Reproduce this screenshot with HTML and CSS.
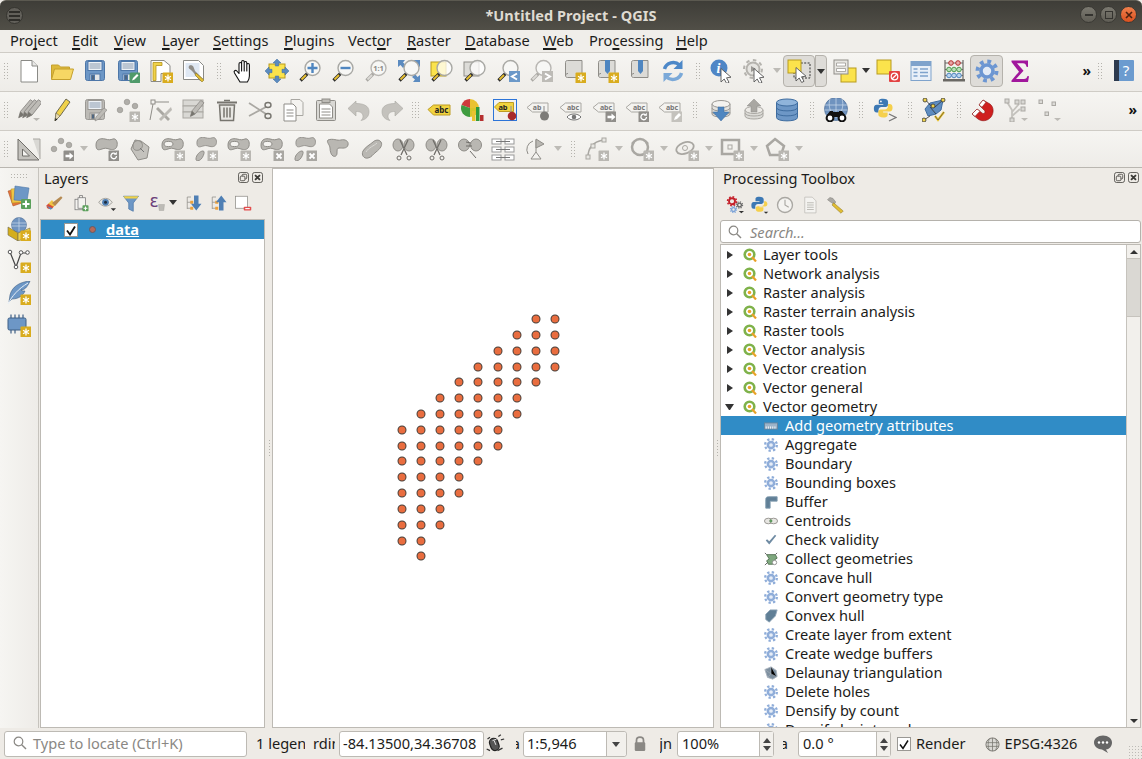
FILE: index.html
```html
<!DOCTYPE html>
<html lang="en">
<head>
<meta charset="utf-8">
<title>*Untitled Project - QGIS</title>
<link rel="stylesheet" href="styles.css">
</head>
<body>
<svg class="defs" aria-hidden="true">
<defs>
<g id="star"><path d="M19 15.6v6.8M16 17.300l6 3.400M16 20.700l6-3.400" stroke="#fff" stroke-width="1.300" fill="none"/></g>
<g id="bg"><rect x="13.500" y="13.500" width="11" height="11" rx="1" fill="#d9ac1e"/><use href="#star"/></g>
<g id="bk"><rect x="13.500" y="13.500" width="11" height="11" rx="1" fill="#b9b7b2"/><use href="#star"/></g>
<g id="bx"><rect x="13.500" y="13.500" width="11" height="11" rx="1" fill="#a9a7a2"/><path d="M16.500 16.500l5 5M21.500 16.500l-5 5" stroke="#fff" stroke-width="1.800"/></g>
<g id="ba"><rect x="13.500" y="13.500" width="11" height="11" rx="1" fill="#908e8a"/><path d="M15.500 17.800h4v-2.300l4 3.500-4 3.500v-2.300h-4z" fill="#fff"/></g>
<g id="br"><rect x="13.500" y="13.500" width="11" height="11" rx="1" fill="#908e8a"/><path d="M21.500 19a2.800 2.800 0 1 1-1-2.200" stroke="#fff" stroke-width="1.300" fill="none"/><path d="M21.800 14.800v3h-3z" fill="#fff"/></g>
<g id="bp"><rect x="13.500" y="13.500" width="11" height="11" rx="1" fill="#c4c2bd"/><path d="M16 22l1-3 4-4 2 2-4 4z" fill="#fff"/></g>
<g id="floppy"><rect x="2.500" y="1.500" width="19" height="20" rx="2"/><rect x="5" y="2.500" width="14" height="9" fill="#eef2f6"/><path d="M6.500 5h11M6.500 7h11M6.500 9h11" stroke="#8a9aae" stroke-width="1"/><rect x="7" y="15" width="10" height="6.500" fill="#e4e6e8"/><rect x="8.500" y="16" width="3" height="5" fill="#4f6680"/></g>
<g id="mag"><path d="M9.500 14.500l-7 7" stroke="#2b2b2b" stroke-width="3.200"/><path d="M8 16l-4.500 4.500" stroke="#e9c232" stroke-width="1.800"/><circle cx="14.500" cy="9" r="7.500" fill="#f7f7f5" stroke="#a8a8a4" stroke-width="1.400"/></g>
<g id="magg"><path d="M9.500 14.500l-7 7" stroke="#aaa8a3" stroke-width="3.200"/><path d="M8 16l-4.500 4.500" stroke="#dcdad6" stroke-width="1.800"/><circle cx="14.500" cy="9" r="7.500" fill="#f7f7f5" stroke="#b8b6b2" stroke-width="1.400"/></g>
<g id="scroll"><path d="M3.500 3.500c0-1.500 1-2 2-2H20v17H5.500c-1.500 0-2-1-2-2z" fill="#dcdbd7" stroke="#8f8d88"/><path d="M3.500 17c0-2 1-2.500 2.500-2.500" fill="none" stroke="#8f8d88"/></g>
<g id="cur"><path d="M11 9.500V23l3.200-3 2.500 4.500 2.300-1.200-2.500-4.500 4.500-.6z" fill="#fff" stroke="#555" stroke-width=".9"/></g>
<g id="tag"><path d="M1 11.500l5.500-4.500H23v10H6.500z" fill="#f1d33f" stroke="#bd9c22"/></g>
<g id="tagg"><path d="M1 9.500l5.500-4.500H22v9H6.500z" fill="#f4f3f0" stroke="#a9a7a2"/></g>
<path id="blob" d="M1 8c0-6 5-7 9-6s5 1 8 0 5 3 4 7-5 4-8 3-4-1-7 0-6 2-6-4z"/>
<g id="blobg"><use href="#blob" fill="#b9b7b2" stroke="#8f8d88"/></g>
<g id="blobh"><use href="#blob" fill="#b9b7b2" stroke="#8f8d88"/><ellipse cx="7.500" cy="7" rx="4.500" ry="2.600" fill="#f4f3f0" stroke="#8f8d88"/></g>
<g id="blob2"><use href="#blob" transform="translate(2 -1) scale(.92 .85)" fill="#b9b7b2" stroke="#8f8d88"/><path d="M2 22c0-4 4-8 7-8 2 0 1 4-1 7s-6 4-6 1z" fill="#b9b7b2" stroke="#8f8d88"/></g>
<g id="sciss"><ellipse cx="6" cy="8" rx="5" ry="6" fill="#b9b7b2" stroke="#8f8d88"/><ellipse cx="17" cy="8" rx="5" ry="6" fill="#b9b7b2" stroke="#8f8d88"/><path d="M8 3l7 15M16 3L9 18" stroke="#6f6d69" stroke-width="1.300"/><circle cx="7" cy="21" r="2" fill="none" stroke="#6f6d69"/><circle cx="17" cy="21" r="2" fill="none" stroke="#6f6d69"/></g>
<g id="dots3"><circle cx="4" cy="12" r="2.800" fill="#b0aea9" stroke="#918f8a" stroke-width=".6"/><circle cx="11" cy="4" r="2.800" fill="#b0aea9" stroke="#918f8a" stroke-width=".6"/><circle cx="19" cy="8" r="2.800" fill="#b0aea9" stroke="#918f8a" stroke-width=".6"/></g>
<g id="gear"><circle cx="12" cy="12" r="7.500" fill="#8fadd9"/><circle cx="12" cy="12" r="10" fill="none" stroke="#8fadd9" stroke-width="4" stroke-dasharray="3.930 3.930"/><circle cx="12" cy="12" r="3.200" fill="#e6edf7"/></g>
<g id="pencilg"><path d="M3 23l2-7L16 3l4 3L9 20z" fill="#bdbbb6" stroke="#8a8884"/><path d="M3 23l2-7 4 4z" fill="#77756f"/></g>

<symbol id="new" viewBox="0 0 24 24"><path d="M4 1.500h11l5.500 5.500v16H4z" fill="#fff" stroke="#8a8a86"/><path d="M15 1.500V7h5.500" fill="#e8e8e6" stroke="#8a8a86"/></symbol>
<symbol id="open" viewBox="0 0 24 24"><path d="M1.500 20V6h7l2 2h9v4" fill="#ddb93a" stroke="#c4a02e"/><path d="M1.500 20.500l3-10.500h19l-3 10.500z" fill="#f6d764" stroke="#c4a02e"/></symbol>
<symbol id="save" viewBox="0 0 24 24"><use href="#floppy" fill="#6d97c6" stroke="#4e77a8"/></symbol>
<symbol id="saveas" viewBox="0 0 24 24"><use href="#floppy" fill="#6d97c6" stroke="#4e77a8"/><rect x="13.500" y="13.500" width="11" height="10.500" rx="1.500" fill="#4f9a6a"/><path d="M16 21.500l1-2.500 4-4 1.500 1.500-4 4z" fill="#fff"/></symbol>
<symbol id="newlayout" viewBox="0 0 24 24"><path d="M2 1.500h13l6 5v8H12v8H2z" fill="#fff" stroke="#8a8a86"/><path d="M4 3.500h9v3H7v15H4z" fill="#f0d24a" stroke="#b3921c" stroke-width=".8"/><use href="#bg"/></symbol>
<symbol id="laymgr" viewBox="0 0 24 24"><path d="M1.500 1.500h15l5 5v14h-20z" fill="#fff" stroke="#8a8a86"/><rect x="3.500" y="4" width="14" height="14" fill="#dfe8f3"/><path d="M9 6c-2 0-3 2-2 3.500l2 1.500 2 2 7 9 3-2-8-8-1.500-4c-.5-1-1-2-3-2z" fill="#8f8d88"/><path d="M14 14l8 7-2 2-7-7z" fill="#e1bd33" stroke="#7d6a1a" stroke-width=".5"/></symbol>
<symbol id="pan" viewBox="0 0 24 24"><path d="M8 23L2.500 14c-1.300-2 1-3.500 2.300-2l2.200 2.500V5c0-2 2.600-2 2.600 0v7-9c0-2 2.600-2 2.600 0v9-8c0-2 2.600-2 2.600 0v8-6c0-2 2.600-2 2.600 0V17c0 3-1 4.500-2 6z" fill="#fff" stroke="#111" stroke-width="1.100" stroke-linejoin="round"/></symbol>
<symbol id="pansel" viewBox="0 0 24 24"><rect x="4" y="5" width="16" height="14" fill="#fbe34c" stroke="#b89b1f"/><g fill="#5b8bc0" stroke="#3e6c9f" stroke-width=".5"><path d="M12 0l4 4h-2.300v3h-3.400V4H8z"/><path d="M12 24l4-4h-2.300v-3h-3.400v3H8z"/><path d="M0 12l4-4v2.300h3v3.400H4V16z"/><path d="M24 12l-4-4v2.300h-3v3.400h3V16z"/></g></symbol>
<symbol id="zin" viewBox="0 0 24 24"><use href="#mag"/><path d="M14.500 4v10M9.500 9h10" stroke="#4f86c0" stroke-width="2.400"/></symbol>
<symbol id="zout" viewBox="0 0 24 24"><use href="#mag"/><path d="M9.500 9h10" stroke="#4f86c0" stroke-width="2.400"/></symbol>
<symbol id="z11" viewBox="0 0 24 24"><use href="#magg"/><text x="14.500" y="11.500" class="svgt-b" font-size="7.500" fill="#8a8884">1:1</text></symbol>
<symbol id="zfull" viewBox="0 0 24 24"><g fill="#5b8bc0"><path d="M1 1h7L6 3.500 9 6 6 9 3.500 6 1 8z"/><path d="M23 1h-7l2 2.500L15 6l3 3 2.500-3L23 8z"/><path d="M23 23h-7l2-2.500-3-2.500 3-3 2.500 3 2.500-2z"/></g><use href="#mag"/></symbol>
<symbol id="zsel" viewBox="0 0 24 24"><rect x="1" y="3" width="15" height="14" fill="#fbe34c" stroke="#b89b1f"/><path d="M9.500 14.500l-7 7" stroke="#2b2b2b" stroke-width="3.200"/><path d="M8 16l-4.500 4.500" stroke="#e9c232" stroke-width="1.800"/><circle cx="14.500" cy="9" r="7.500" fill="#fff" fill-opacity=".75" stroke="#a8a8a4" stroke-width="1.400"/></symbol>
<symbol id="zlay" viewBox="0 0 24 24"><rect x="1" y="3" width="15" height="14" fill="#dddcd8" stroke="#8f8d88"/><path d="M9.500 14.500l-7 7" stroke="#2b2b2b" stroke-width="3.200"/><path d="M8 16l-4.500 4.500" stroke="#e9c232" stroke-width="1.800"/><circle cx="14.500" cy="9" r="7.500" fill="#fff" fill-opacity=".75" stroke="#a8a8a4" stroke-width="1.400"/></symbol>
<symbol id="zlast" viewBox="0 0 24 24"><use href="#mag"/><rect x="13" y="12" width="11" height="11" fill="#6b98c8"/><path d="M21 14.500l-5 3 5 3" fill="none" stroke="#fff" stroke-width="2"/></symbol>
<symbol id="znext" viewBox="0 0 24 24"><use href="#magg"/><rect x="13" y="12" width="11" height="11" fill="#bdbbb6"/><path d="M16 14.500l5 3-5 3" fill="none" stroke="#fff" stroke-width="2"/></symbol>
<symbol id="mapnew" viewBox="0 0 24 24"><use href="#scroll"/><use href="#bg"/></symbol>
<symbol id="bmnew" viewBox="0 0 24 24"><use href="#scroll"/><path d="M10 1h5v11l-2.500 3L10 12z" fill="#4f86c0"/><use href="#bg"/></symbol>
<symbol id="bm" viewBox="0 0 24 24"><use href="#scroll"/><path d="M10 1h5v11l-2.500 3L10 12z" fill="#4f86c0"/></symbol>
<symbol id="refresh" viewBox="0 0 24 24"><path d="M3.500 10a9 8.500 0 0 1 15-4" fill="none" stroke="#4d88c8" stroke-width="3.500"/><path d="M21.500 1v9h-9z" fill="#4d88c8"/><path d="M20.500 14a9 8.500 0 0 1-15 4" fill="none" stroke="#7ba9d8" stroke-width="3.500"/><path d="M2.500 23v-9h9z" fill="#7ba9d8"/></symbol>
<symbol id="ident" viewBox="0 0 24 24"><circle cx="9" cy="9" r="8.500" fill="#4f86c6"/><text x="8.500" y="14" class="svgt-i" font-size="14" fill="#fff">i</text><use href="#cur"/></symbol>
<symbol id="actions" viewBox="0 0 24 24"><circle cx="10" cy="10" r="6.500" fill="#e6e5e1" stroke="#b5b3ae" stroke-width="2"/><circle cx="10" cy="10" r="9" fill="none" stroke="#b5b3ae" stroke-width="2" stroke-dasharray="3.500 3.500"/><path d="M8 7l5 3-5 3z" fill="#9a9894"/><use href="#cur"/></symbol>
<symbol id="select" viewBox="0 0 24 24"><rect x="7" y="4" width="16" height="15" fill="none" stroke="#333" stroke-dasharray="2 1.400"/><rect x="1" y="1" width="13" height="13" fill="#fbe34c" stroke="#b89b1f"/><use href="#cur" transform="translate(-2 -1)"/></symbol>
<symbol id="formsel" viewBox="0 0 24 24"><rect x="8" y="9" width="15" height="14" fill="#fbe34c" stroke="#b89b1f"/><rect x="1" y="1" width="14" height="14" fill="#e8e7e3" stroke="#8f8d88"/><path d="M3.500 4h9v3h-9zM3.500 9.500h9v3h-9z" fill="#fff" stroke="#8f8d88" stroke-width=".7"/></symbol>
<symbol id="desel" viewBox="0 0 24 24"><rect x="1" y="1" width="14" height="14" fill="#fbe34c" stroke="#b89b1f"/><rect x="13" y="12" width="11" height="11" rx="1" fill="#e34242"/><circle cx="18.500" cy="17.500" r="3.300" fill="none" stroke="#fff" stroke-width="1.200"/><path d="M16 20l5-5" stroke="#fff" stroke-width="1.200"/></symbol>
<symbol id="table" viewBox="0 0 24 24"><rect x="2" y="2.500" width="20" height="19" fill="#e9f0f8" stroke="#7fa3cc"/><rect x="2" y="2.500" width="20" height="4.500" fill="#7fa3cc"/><path d="M4.500 10h4M4.500 13.500h4M4.500 17h4M11 10h8M11 13.500h8M11 17h8" stroke="#7fa3cc" stroke-width="1.300"/></symbol>
<symbol id="abacus" viewBox="0 0 24 24"><path d="M3 1v20M21 1v20" stroke="#6a6864" stroke-width="1.200"/><rect x="1" y="20" width="22" height="2.500" fill="#6a6864"/><path d="M3 4h18M3 10.500h18M3 16.500h18" stroke="#6a6864"/><g fill="#e8a8a8" stroke="#b52f2f"><circle cx="9" cy="4" r="2.300"/><circle cx="16" cy="4" r="2.300"/></g><g fill="#b9e0b9" stroke="#4f9a4f"><circle cx="7" cy="10.500" r="2.300"/><circle cx="12" cy="10.500" r="2.300"/><circle cx="17" cy="10.500" r="2.300"/></g><g fill="#b9d4ee" stroke="#4f86c0"><circle cx="7" cy="16.500" r="2.300"/><circle cx="12" cy="16.500" r="2.300"/><circle cx="17" cy="16.500" r="2.300"/></g></symbol>
<symbol id="gearb" viewBox="0 0 24 24"><circle cx="12" cy="12" r="6" fill="#e3ebf6" stroke="#6c96d2" stroke-width="3.600"/><circle cx="12" cy="12" r="9.500" fill="none" stroke="#6c96d2" stroke-width="4" stroke-dasharray="3.730 3.730"/></symbol>
<symbol id="sigma" viewBox="0 0 24 24"><path d="M3.500 1.500h16.500v6.500l-1.500-.2c-.5-2.500-1.500-3.500-3.500-3.500H9l6.500 7.500L8 20h8c2 0 3-1 3.500-3l1.500.2L20 23H3.500v-1.600l7.500-8.700-7.500-9.700z" fill="#a1179c"/></symbol>
<symbol id="help" viewBox="0 0 24 24"><rect x="2" y="1" width="20" height="21" rx="1" fill="#6b9bcf"/><rect x="2" y="1" width="5" height="21" fill="#2d3a4e"/><text x="14" y="17" class="svgt" font-size="15" fill="#fff">?</text></symbol>

<symbol id="editall" viewBox="0 0 24 24"><use href="#pencilg" transform="translate(-1 -1) scale(.9)"/><use href="#pencilg" transform="translate(3 -1) scale(.9)"/><use href="#pencilg" transform="translate(7 -1) scale(.9)"/><path d="M16 20h7l-3.500 3z" fill="#b9b7b2"/></symbol>
<symbol id="pencil" viewBox="0 0 24 24"><path d="M5 23l1-8L16 1l4 3L10 18z" fill="#f0d24a" stroke="#6f6a52"/><path d="M5 23l1-8 4 3z" fill="#e9dcb4" stroke="#6f6a52" stroke-width=".6"/><path d="M5 23l.5-3 2 1.500z" fill="#222"/></symbol>
<symbol id="saveg" viewBox="0 0 24 24"><use href="#floppy" fill="#bdbbb6" stroke="#9a9894"/><path d="M12 23l1-4 8-9 3 2-8 9z" fill="#bdbbb6" stroke="#8a8884" stroke-width=".6"/></symbol>
<symbol id="adddots" viewBox="0 0 24 24"><use href="#dots3"/><use href="#bk"/></symbol>
<symbol id="digit" viewBox="0 0 24 24"><rect x="2" y="2" width="4" height="4" fill="none" stroke="#8f8d88"/><path d="M6 4h14M4 6L1 22" stroke="#8f8d88"/><path d="M9 9l12 12-2 2L7 11z" fill="#a9a7a2"/><path d="M22 9L10 21l2 2L23 12z" fill="#bdbbb6"/></symbol>
<symbol id="tabpen" viewBox="0 0 24 24"><g fill="#d9d8d4" stroke="#a9a7a2"><rect x="1" y="2" width="20" height="6"/><rect x="1" y="8" width="20" height="6"/><rect x="1" y="14" width="20" height="6"/></g><use href="#pencilg" transform="translate(6 0) scale(.8)"/></symbol>
<symbol id="trash" viewBox="0 0 24 24"><path d="M4.500 7h15l-1 15.500h-13z" fill="#e8e7e3" stroke="#77756f" stroke-width="1.500"/><path d="M2 4.500h20" stroke="#77756f" stroke-width="2"/><path d="M9 2.500h6" stroke="#77756f" stroke-width="1.500"/><path d="M9 9.500v10M12 9.500v10M15 9.500v10" stroke="#77756f" stroke-width="1.500"/></symbol>
<symbol id="cut" viewBox="0 0 24 24"><path d="M1 5l17 11M1 18L18 9" stroke="#aaa8a3" stroke-width="1.800"/><ellipse cx="20" cy="18" rx="3" ry="2.500" fill="none" stroke="#77756f" stroke-width="1.400"/><ellipse cx="20" cy="7" rx="3" ry="2.500" fill="none" stroke="#77756f" stroke-width="1.400"/></symbol>
<symbol id="copy" viewBox="0 0 24 24"><path d="M10 1.500h9l3 3v13H10z" fill="#f4f3f0" stroke="#a9a7a2"/><path d="M3 6h9l3 3v14H3z" fill="#fff" stroke="#8f8d88"/><path d="M5.500 12h7M5.500 15h7M5.500 18h7" stroke="#8f8d88"/></symbol>
<symbol id="paste" viewBox="0 0 24 24"><rect x="2.500" y="2.500" width="19" height="20" rx="1" fill="#d9d8d4" stroke="#8f8d88"/><rect x="8" y="1" width="8" height="3.500" fill="#bdbbb6" stroke="#8f8d88"/><path d="M5.500 6h10l3 3v11h-13z" fill="#fff" stroke="#8f8d88"/><path d="M7.500 11h9M7.500 14h9M7.500 17h9" stroke="#8f8d88"/></symbol>
<symbol id="undo" viewBox="0 0 24 24"><path d="M9 3L1 10.500 9 18v-4.500c4 0 7 1 7 5 0 2-1 3-2 4 5-1 8-4 8-9 0-6-6-8-13-8z" fill="#c4c2bd" stroke="#aaa8a3" stroke-width=".6"/></symbol>
<symbol id="redo" viewBox="0 0 24 24"><path d="M15 3l8 7.500L15 18v-4.500c-4 0-7 1-7 5 0 2 1 3 2 4-5-1-8-4-8-9 0-6 6-8 13-8z" fill="#c4c2bd" stroke="#aaa8a3" stroke-width=".6"/></symbol>
<symbol id="labelabc" viewBox="0 0 24 24"><use href="#tag"/><text x="14.500" y="15" class="svgt-b" font-size="8" fill="#222">abc</text></symbol>
<symbol id="pie" viewBox="0 0 24 24"><path d="M10 10V1a9 9 0 0 0-8.500 6z" fill="#cf3b3b"/><path d="M10 1a9 9 0 0 1 9 9h-9z" fill="#e9c232"/><path d="M10 10H19a9 9 0 0 1-9 9z" fill="#d8c52a"/><path d="M10 10l-8.500-3A9 9 0 0 0 10 19z" fill="#3f9c3f"/><rect x="12" y="13" width="3.500" height="10" fill="#e9c232"/><rect x="16" y="9" width="3.500" height="14" fill="#2f9a3c"/><rect x="20" y="17" width="3.500" height="6" fill="#b52f2f"/></symbol>
<symbol id="labpin" viewBox="0 0 24 24"><rect x=".5" y="1.500" width="23" height="21" fill="none" stroke="#2c74d8"/><path d="M1.500 9l4.500-4.500h14.500v9H6z" fill="#f1d33f" stroke="#bd9c22"/><text x="10" y="12" class="svgt-b" font-size="7.500" fill="#222">ab</text><path d="M18 8v9" stroke="#999" stroke-width="1.200"/><circle cx="19" cy="18" r="4.300" fill="#a82a2a"/></symbol>
<symbol id="labg1" viewBox="0 0 24 24"><use href="#tagg"/><text x="11" y="12" class="svgt-b" font-size="7" fill="#777">ab</text><path d="M18 8v8" stroke="#999" stroke-width="1.200"/><circle cx="18.500" cy="18" r="4.500" fill="#7d7b77"/></symbol>
<symbol id="labg2" viewBox="0 0 24 24"><use href="#tagg"/><text x="14" y="12" class="svgt-b" font-size="7" fill="#777">abc</text><path d="M8 19c3-4 11-4 14 0-3 4-11 4-14 0z" fill="#fff" stroke="#777"/><circle cx="15" cy="19" r="2.300" fill="#777"/></symbol>
<symbol id="labg3" viewBox="0 0 24 24"><use href="#tagg"/><text x="14" y="12" class="svgt-b" font-size="7" fill="#777">abc</text><use href="#ba"/></symbol>
<symbol id="labg4" viewBox="0 0 24 24"><use href="#tagg"/><text x="14" y="12" class="svgt-b" font-size="7" fill="#777">abc</text><use href="#br"/></symbol>
<symbol id="labg5" viewBox="0 0 24 24"><use href="#tagg"/><text x="14" y="12" class="svgt-b" font-size="7" fill="#777">abc</text><use href="#bp"/></symbol>
<symbol id="dbdown" viewBox="0 0 24 24"><g fill="#e4e3df" stroke="#9a9894"><path d="M3 6v10c0 4 18 4 18 0V6"/><path d="M3 10c0 4 18 4 18 0M3 14c0 4 18 4 18 0" fill="none"/><ellipse cx="12" cy="6" rx="9" ry="3.500" fill="#f4f3f0"/></g><path d="M9 9h6v5h5l-8 9-8-9h5z" fill="#4f86c0" stroke="#3a6a9f" stroke-width=".5"/></symbol>
<symbol id="dbup" viewBox="0 0 24 24"><g fill="#dcdbd7" stroke="#a9a7a2"><path d="M3 12v6c0 4 18 4 18 0v-6"/><path d="M3 15c0 4 18 4 18 0" fill="none"/><ellipse cx="12" cy="12" rx="9" ry="3.500" fill="#eceae6"/></g><path d="M12 1l7 7h-4v6H9V8H5z" fill="#a9a7a2" stroke="#8f8d88" stroke-width=".5"/></symbol>
<symbol id="db" viewBox="0 0 24 24"><g fill="#6d97c6" stroke="#3e6c9f"><path d="M1.500 4.500v15c0 4.500 21 4.500 21 0v-15"/><ellipse cx="12" cy="4.500" rx="10.500" ry="3.500" fill="#8fb4db"/><path d="M1.500 9.500c0 4.500 21 4.500 21 0M1.500 14.500c0 4.500 21 4.500 21 0" fill="none"/></g></symbol>
<symbol id="globebin" viewBox="0 0 24 24"><circle cx="12" cy="11" r="11.500" fill="#6f93bf" stroke="#4d6d95" stroke-width=".7"/><path d="M1 7h22M.5 12h23M12 0v20M6 1c-2 6 0 12 3 17M18 1c2 6 0 12-3 17" stroke="#cddced" stroke-width=".7" fill="none"/><circle cx="6" cy="20" r="3.400" fill="#fff" stroke="#111" stroke-width="2"/><circle cx="18" cy="20" r="3.400" fill="#fff" stroke="#111" stroke-width="2"/><path d="M8 14h8v5H8zM3 17l3-4h3v4zM15 13h3l3 4h-6z" fill="#111"/></symbol>
<symbol id="python" viewBox="0 0 24 24"><path d="M11.800 1c-5 0-5 2-5 3.500V7h5.300v1H4.500C2 8 1 10 1 12.500S2 17 4.500 17h2v-3c0-2 1.500-3.500 3.500-3.500h5c1.500 0 2.700-1.200 2.700-2.700V4.500C17.700 2.500 16 1 11.800 1z" fill="#3c78b4"/><path d="M12.200 23c5 0 5-2 5-3.500V17h-5.300v-1h7.600c2.500 0 3.500-2 3.500-4.500S22 7 19.500 7h-2v3c0 2-1.500 3.500-3.500 3.500H9c-1.500 0-2.700 1.200-2.700 2.700v3.300c0 2 1.700 3.500 5.900 3.500z" fill="#f5d04c"/><circle cx="9.300" cy="4" r="1" fill="#fff"/></symbol>
<symbol id="pythons" viewBox="0 0 24 24"><path d="M11 1C6 1 6 3 6 4.500V7h5.300v1H3.700C1.200 8 .5 10 .5 12.500S1.200 17 3.700 17h2v-3c0-2 1.500-3.500 3.500-3.500h5c1.500 0 2.700-1.200 2.700-2.700V4.500C16.900 2.500 15.200 1 11 1z" fill="#3c78b4"/><path d="M11.500 21c5 0 5-2 5-3.500V15h-5.300v-1h7.600c2 0 3-2 3-3.500S20.800 7 18.800 7h-1.300v3c0 2-1.500 3.500-3.500 3.500H9c-1.500 0-2.700 1.200-2.700 2.700v1.300c0 2 1.700 3.500 5.200 3.500z" fill="#f5d04c"/><path d="M17 21h6l-3 2.500z" fill="#333"/></symbol>
<symbol id="pyterm" viewBox="0 0 24 24"><use href="#python" transform="scale(.85)"/><path d="M16 16l7 3.500-7 3.500" fill="none" stroke="#777" stroke-width="1.300"/></symbol>
<symbol id="network" viewBox="0 0 24 24"><path d="M8 5l13-3-2 10-5 4-8 2-3-7z" fill="#5f8dc0" stroke="#3e6c9f"/><path d="M3 1l5 6 5 2 8-7M2 22l6-4M8 9l6 7" stroke="#333" stroke-width=".8" fill="none"/><g fill="#f0d24a" stroke="#333" stroke-width=".8"><circle cx="3" cy="2" r="2"/><circle cx="21" cy="2" r="2"/><circle cx="11" cy="8" r="2"/><circle cx="2" cy="22" r="2"/></g><path d="M13 18l3 4 6-8" fill="none" stroke="#e9c232" stroke-width="2.200"/><path d="M13 18l3 4 6-8" fill="none" stroke="#333" stroke-width=".6"/></symbol>
<symbol id="magnet" viewBox="0 0 24 24"><path d="M12 2l7 4c4 3 4 9 1 13s-9 5-13 2l-6-5 5-5 5 4c2 1.500 4-.5 2.500-2.500L8 7z" fill="#cf1f1f" stroke="#8c1414" stroke-width=".6"/><path d="M12 2l-4 5 3 2.200 4-5zM1 16l5-5 3 2.200-5 5.200z" fill="#fff" stroke="#8c1414" stroke-width=".6"/></symbol>
<symbol id="vtree" viewBox="0 0 24 24"><g fill="none" stroke="#c4c2bd" stroke-width="1.800"><path d="M8 21V12L3 4M8 14l7-8M8 18l8-7"/></g><g fill="#d9d8d4" stroke="#aaa8a3"><rect x="1" y="1" width="4" height="4"/><rect x="11" y="2" width="4" height="4"/><rect x="17" y="2" width="4" height="4"/><rect x="17" y="9" width="4" height="4"/><rect x="6" y="20" width="4" height="4"/></g><path d="M17 20h7l-3.500 3z" fill="#bdbbb6"/></symbol>
<symbol id="squares" viewBox="0 0 24 24"><g fill="#dcdbd7" stroke="#aaa8a3"><rect x="2" y="2" width="3.500" height="3.500"/><rect x="15" y="4" width="3.500" height="3.500"/><rect x="8" y="14" width="3.500" height="3.500"/></g><path d="M17 20h7l-3.500 3z" fill="#bdbbb6"/></symbol>
<symbol id="ruler" viewBox="0 0 24 24"><path d="M16 2h7v20" fill="#d9d8d4" stroke="#a9a7a2"/><path d="M1 23V2l21 21z" fill="#c4c2bd" stroke="#6f6d69"/><path d="M5.500 19v-7l7 7z" fill="#f4f3f0" stroke="#6f6d69"/></symbol>
<symbol id="dotsarrow" viewBox="0 0 24 24"><use href="#dots3"/><use href="#ba"/></symbol>
<symbol id="blobrot" viewBox="0 0 24 24"><use href="#blobg"/><use href="#br"/></symbol>
<symbol id="hexa" viewBox="0 0 24 24"><path d="M3 12L7 3l6 1 8 6-2 11-9 2z" fill="#c4c2bd" stroke="#8f8d88"/><path d="M5 9c0-5 5-7 8-4s1 7-2 8-6 0-6-4z" fill="#b9b7b2" stroke="#8f8d88"/><path d="M12 11l4 4" stroke="#777"/></symbol>
<symbol id="bh1" viewBox="0 0 24 24"><use href="#blobh"/><use href="#bk"/></symbol>
<symbol id="bh2" viewBox="0 0 24 24"><use href="#blob2"/><use href="#bk"/></symbol>
<symbol id="bhx" viewBox="0 0 24 24"><use href="#blobh"/><use href="#bx"/></symbol>
<symbol id="b2x" viewBox="0 0 24 24"><use href="#blob2"/><use href="#bx"/></symbol>
<symbol id="reshape" viewBox="0 0 24 24"><path d="M2 3c5-2 9 1 13 0s8 1 7 5-6 3-9 3c-2 0-2 2-2 5s-2 4-4 3-3-5-3-8-4-6-2-8z" fill="#b9b7b2" stroke="#8f8d88"/></symbol>
<symbol id="offset" viewBox="0 0 24 24"><path d="M4 14c-2 4 1 8 5 7s4-3 8-6 7-7 5-10-6-2-8 0-8 5-10 9z" fill="#b9b7b2" stroke="#8f8d88"/><path d="M7 15c3-5 8-6 11-9" stroke="#d9d8d4" fill="none"/></symbol>
<symbol id="split1" viewBox="0 0 24 24"><use href="#sciss"/></symbol>
<symbol id="merge" viewBox="0 0 24 24"><ellipse cx="6" cy="8" rx="5.500" ry="6" fill="#b9b7b2" stroke="#8f8d88"/><ellipse cx="18" cy="8" rx="5.500" ry="6" fill="#b9b7b2" stroke="#8f8d88"/><path d="M8 5l5 1M8 9h6M12 14l6 7" stroke="#6f6d69" fill="none"/></symbol>
<symbol id="align" viewBox="0 0 24 24"><g fill="#fff" stroke="#999"><rect x="1" y="2" width="9" height="5"/><rect x="14" y="2" width="9" height="5"/><rect x="1" y="10" width="9" height="5"/><rect x="14" y="10" width="9" height="5"/><rect x="1" y="18" width="9" height="5"/><rect x="14" y="18" width="9" height="5"/></g><path d="M5 4.500h14M5 12.500h14M5 20.500h14" stroke="#777"/></symbol>
<symbol id="rotpt" viewBox="0 0 24 24"><path d="M12 3v12l-5 7h10l-5-7" fill="#f4f3f0" stroke="#8f8d88"/><path d="M12 2l8 5-8 4z" fill="#b9b7b2" stroke="#8f8d88"/><path d="M9 4a9 9 0 0 0-5 13" fill="none" stroke="#8f8d88"/></symbol>
<symbol id="curve" viewBox="0 0 24 24"><path d="M3 20C3 10 8 5 18 3" fill="none" stroke="#a9a7a2" stroke-width="1.500"/><g fill="#e8e7e3" stroke="#a9a7a2"><rect x="1" y="18" width="4" height="4"/><rect x="6" y="7" width="4" height="4"/><rect x="17" y="1" width="4" height="4"/></g><use href="#bk"/></symbol>
<symbol id="circ" viewBox="0 0 24 24"><circle cx="10" cy="10" r="8" fill="none" stroke="#a9a7a2" stroke-width="2.500"/><circle cx="3" cy="6" r="1.500" fill="#a9a7a2"/><circle cx="17" cy="6" r="1.500" fill="#a9a7a2"/><use href="#bk"/></symbol>
<symbol id="ellip" viewBox="0 0 24 24"><ellipse cx="10" cy="11" rx="9" ry="5.500" fill="none" stroke="#a9a7a2" stroke-width="1.800" transform="rotate(-20 10 11)"/><circle cx="10" cy="11" r="2.500" fill="none" stroke="#a9a7a2"/><use href="#bk"/></symbol>
<symbol id="rect" viewBox="0 0 24 24"><rect x="2" y="3" width="17" height="14" fill="none" stroke="#a9a7a2" stroke-width="2.500"/><rect x="8" y="8" width="4" height="4" fill="none" stroke="#a9a7a2"/><use href="#bk"/></symbol>
<symbol id="poly" viewBox="0 0 24 24"><path d="M10 2l9 7-3 9H5L2 9z" fill="none" stroke="#a9a7a2" stroke-width="2.500"/><use href="#bk"/></symbol>

<symbol id="lmgr" viewBox="0 0 24 24"><path d="M1 6l12-3 5 14-12 4z" fill="#e2733a" stroke="#a34f20" stroke-width=".5"/><path d="M4 4l12-1 1 14-12 1z" fill="#f0c444" stroke="#b3921c" stroke-width=".5"/><path d="M8 1l14 2-2 13-13-1z" fill="#6d97c6" stroke="#4e77a8" stroke-width=".6"/><rect x="14" y="14" width="10" height="10" rx="1" fill="#5ba05b"/><path d="M19 15.500v7M15.500 19h7" stroke="#fff" stroke-width="2"/></symbol>
<symbol id="lbox" viewBox="0 0 24 24"><circle cx="12" cy="8" r="7.500" fill="#6f93bf" stroke="#4d6d95" stroke-width=".6"/><path d="M5 6h14M4.500 9h15M12 .5v14" stroke="#cddced" stroke-width=".7"/><path d="M1 10l10 6v8L1 18z" fill="#d4ae1c" stroke="#6f6a52" stroke-width=".6"/><path d="M11 16l12-5v8l-12 5z" fill="#f0d24a" stroke="#6f6a52" stroke-width=".6"/><use href="#bg"/></symbol>
<symbol id="lvec" viewBox="0 0 24 24"><path d="M3 3l6 15 5-14h7" fill="none" stroke="#444" stroke-width="1.200"/><g fill="#fff" stroke="#555"><circle cx="3" cy="3" r="1.800"/><circle cx="9" cy="18" r="1.800"/><circle cx="14" cy="3.500" r="1.800"/><circle cx="20.500" cy="3.500" r="1.800"/></g><use href="#bg"/></symbol>
<symbol id="lfeather" viewBox="0 0 24 24"><path d="M23 0C12 1 5 6 3 14l-1 7 3-3c6 0 11-3 13-8-2 0-3 0-4-1 3 0 6-2 9-9z" fill="#6d97c6" stroke="#3f5f85" stroke-width=".6"/><path d="M1 23C5 15 11 8 21 2" stroke="#e8f0f8" fill="none"/><use href="#bg"/></symbol>
<symbol id="lchip" viewBox="0 0 24 24"><rect x="1" y="5" width="18" height="12" rx="1.500" fill="#6d97c6" stroke="#3f5f85"/><path d="M4 1.500v3.500M8 1.500v3.500M12 1.500v3.500M16 1.500v3.500M4 17v3.500M8 17v3.500" stroke="#3f5f85" stroke-width="1.200"/><use href="#bg"/></symbol>

<symbol id="tstyle" viewBox="0 0 24 24"><path d="M1 15c3-4 8-4 11-1-2 4-4 6-7 6-3 0-5-2-4-5z" fill="#d84f3a"/><path d="M3 13l5-5 5 6-3 3z" fill="#f0c444"/><path d="M8 12l12-9 2 2-10 11z" fill="#b58a52"/><path d="M1 16l8 3-3 2z" fill="#5b8bc0"/></symbol>
<symbol id="tgroup" viewBox="0 0 24 24"><path d="M10 2h4v4h-1v12h-3z" fill="none" stroke="#777"/><rect x="4" y="7" width="10" height="14" fill="#f4f3f0" stroke="#777"/><rect x="8" y="5" width="10" height="14" fill="#f4f3f0" stroke="#777"/><rect x="14" y="15" width="8" height="8" rx="1" fill="#5ba05b"/><path d="M18 16.500v5M15.500 19h5" stroke="#fff" stroke-width="1.500"/></symbol>
<symbol id="teye" viewBox="0 0 24 24"><path d="M1 11c5-7 13-7 18 0-5 7-13 7-18 0z" fill="#e8e7e3" stroke="#8f8d88"/><circle cx="10" cy="11" r="4.500" fill="#4f7fb4"/><circle cx="10" cy="11" r="2" fill="#1d2c3d"/><path d="M17 19h7l-3.500 3.500z" fill="#333"/></symbol>
<symbol id="tfilter" viewBox="0 0 24 24"><path d="M2 3h20l-7 9v11l-6-3v-8z" fill="#6d97c6" stroke="#4e77a8"/><path d="M2 3h20l-2 3H4z" fill="#f0d24a"/></symbol>
<symbol id="teps" viewBox="0 0 24 24"><text x="8" y="17" class="svgt" font-size="24" fill="#6b3f7a">ε</text><path d="M14 14h8l-1 8h-6z" fill="#bdbbb6" stroke="#9a9894" stroke-width=".5"/></symbol>
<symbol id="tdown" viewBox="0 0 24 24"><path d="M3 4h5M3 4v16M3 11h5M3 19h5" stroke="#8f8d88" fill="none"/><rect x="7" y="9" width="4" height="4" fill="#f0a23a"/><rect x="7" y="17" width="4" height="4" fill="#f0a23a"/><path d="M12 2h6v11h4l-7 9-7-9h4z" fill="#4f7fb4"/></symbol>
<symbol id="tup" viewBox="0 0 24 24"><path d="M3 4h5M3 4v16M3 11h5M3 19h5" stroke="#8f8d88" fill="none"/><rect x="7" y="9" width="4" height="4" fill="#f0a23a"/><rect x="7" y="17" width="4" height="4" fill="#f0a23a"/><path d="M12 22h6V11h4l-7-9-7 9h4z" fill="#4f7fb4"/></symbol>
<symbol id="tremove" viewBox="0 0 24 24"><rect x="2" y="3" width="16" height="16" fill="#fff" stroke="#8f8d88"/><rect x="13" y="17" width="10" height="5" rx="1" fill="#e34f4f"/><path d="M15 19.500h6" stroke="#fff" stroke-width="1.500"/></symbol>
<symbol id="tmodels" viewBox="0 0 24 24"><circle cx="8" cy="7" r="4" fill="none" stroke="#c4202a" stroke-width="2.500"/><circle cx="8" cy="7" r="6" fill="none" stroke="#c4202a" stroke-width="2" stroke-dasharray="2.300 2.400"/><circle cx="18" cy="12" r="2.500" fill="none" stroke="#666" stroke-width="1.800"/><circle cx="18" cy="12" r="4.200" fill="none" stroke="#666" stroke-width="1.400" stroke-dasharray="1.600 1.700"/><circle cx="10" cy="18" r="2.500" fill="none" stroke="#7ba3d8" stroke-width="1.800"/><circle cx="10" cy="18" r="4.200" fill="none" stroke="#7ba3d8" stroke-width="1.400" stroke-dasharray="1.600 1.700"/><path d="M17 20h7l-3.500 3z" fill="#333"/></symbol>
<symbol id="tclock" viewBox="0 0 24 24"><circle cx="12" cy="12" r="10" fill="#f4f3f0" stroke="#a9a7a2" stroke-width="1.800"/><path d="M12 5v7l5 3" fill="none" stroke="#a9a7a2" stroke-width="1.500"/></symbol>
<symbol id="tdoc" viewBox="0 0 24 24"><path d="M5 1.500h10l5 5v16H5z" fill="#f4f3f0" stroke="#bdbbb6"/><path d="M8 9h9M8 12h9M8 15h9M8 18h9" stroke="#bdbbb6" stroke-width="1.300"/></symbol>
<symbol id="twrench" viewBox="0 0 24 24"><path d="M2 5l3-3 4 1 4 5-2 3-5-3z" fill="#aaa8a3" stroke="#77756f" stroke-width=".6"/><path d="M10 9l13 11-3 3L8 12z" fill="#e1bd33" stroke="#7d6a1a" stroke-width=".6"/></symbol>
<symbol id="qgis" viewBox="0 0 14 14"><circle cx="6.500" cy="6.500" r="4.800" fill="#fff" stroke="#7fb24a" stroke-width="2.600"/><path d="M9 9l4 4.500" stroke="#e9a127" stroke-width="2.200"/><circle cx="6.500" cy="6.500" r="1.800" fill="#e9a127"/></symbol>
<symbol id="gear14" viewBox="0 0 24 24"><use href="#gear"/></symbol>
<symbol id="addgeo" viewBox="0 0 16 16"><rect x=".5" y="4.500" width="15" height="7" fill="#9db4c9" stroke="#66839c"/><path d="M2.500 11V8.500M5 11V8.500M7.500 11V8.500M10 11V8.500M12.500 11V8.500" stroke="#fff"/></symbol>
<symbol id="buffer" viewBox="0 0 16 16"><path d="M2 15V5c0-2 1-3 3-3h10v5H8c-1 0-1 0-1 1v7z" fill="#607f96" stroke="#7f9aae"/></symbol>
<symbol id="centroid" viewBox="0 0 16 16"><ellipse cx="5" cy="8" rx="4.500" ry="3.200" fill="#e8e7e3" stroke="#8f8d88"/><ellipse cx="11" cy="8" rx="4.500" ry="3.200" fill="#e8e7e3" stroke="#8f8d88"/><circle cx="8" cy="8" r="1.600" fill="#5f9a5f"/></symbol>
<symbol id="check" viewBox="0 0 16 16"><path d="M2 8.500l4 4.500 8-10-1.500-1L6 9.500 3.500 7z" fill="#6f8ba3"/></symbol>
<symbol id="collect" viewBox="0 0 16 16"><path d="M3 3h10l2 4-3 2-2 5H5l-2-4 3-2z" fill="#7fa87f" stroke="#4f6f4f"/><path d="M1 1l2 2M15 1l-2 2M1 15l3-3" stroke="#555"/><circle cx="12" cy="12" r="2.500" fill="#fff" stroke="#888"/></symbol>
<symbol id="convex" viewBox="0 0 16 16"><path d="M2 6l5-5h8l-2 7-7 7-4-3z" fill="#607f96" stroke="#8fa5b8"/></symbol>
<symbol id="delaunay" viewBox="0 0 16 16"><path d="M1 4l7-3 6 4 1 7-5 3-6-2z" fill="#7d8f9f" stroke="#a9b4be"/><path d="M8 1v8l6 3M8 9l-4 4M1 4l7 5" stroke="#a9b4be" stroke-width=".7"/></symbol>
<symbol id="mouse" viewBox="0 0 24 24"><rect x="6" y="5" width="10" height="15" rx="5" fill="#555" stroke="#222" stroke-width="1.500" transform="rotate(-20 11 12)"/><path d="M9 8l5-2M11 8l2 5" stroke="#fff"/><path d="M3 6l3-2M16 3l3-2M19 7l4-1M2 18l4 2M15 20l6-3" stroke="#333" stroke-width="1.500" fill="none"/></symbol>
<symbol id="lock" viewBox="0 0 16 20"><path d="M4 9V6c0-5 8-5 8 0v3" fill="none" stroke="#8a8884" stroke-width="2"/><rect x="2" y="8" width="12" height="10" rx="1.500" fill="#8a8884"/></symbol>
<symbol id="globe" viewBox="0 0 16 16"><circle cx="8" cy="8" r="7" fill="#d9d8d4" stroke="#77756f"/><path d="M1.500 6h13M1.500 10h13M8 1v14M4.500 2c-1.500 4-1.500 8 0 12M11.500 2c1.500 4 1.500 8 0 12" stroke="#77756f" stroke-width=".8" fill="none"/></symbol>
<symbol id="chat" viewBox="0 0 20 20"><path d="M10 1.500c5 0 9 3 9 7s-3 7-6 7l2 3.500-6-3.500c-4 0-8-3-8-7s4-7 9-7z" fill="#666"/><circle cx="6" cy="8.500" r="1.200" fill="#fff"/><circle cx="10" cy="8.500" r="1.200" fill="#fff"/><circle cx="14" cy="8.500" r="1.200" fill="#fff"/></symbol>
<symbol id="floatic" viewBox="0 0 12 12"><rect x=".5" y=".5" width="11" height="11" rx="2.500" fill="none" stroke="#55534f"/><rect x="4.500" y="2.500" width="5" height="5" rx="1" fill="none" stroke="#55534f"/><rect x="2.500" y="4.500" width="5" height="5" rx="1" fill="#eeebe6" stroke="#55534f"/></symbol>
<symbol id="closeic" viewBox="0 0 12 12"><rect x=".5" y=".5" width="11" height="11" rx="2.500" fill="none" stroke="#55534f"/><path d="M3.300 3.300l5.400 5.400M8.700 3.300l-5.400 5.400" stroke="#3c3b37" stroke-width="2"/></symbol>
<symbol id="searchic" viewBox="0 0 14 14"><circle cx="5.500" cy="5.500" r="4.300" fill="none" stroke="#8a8884" stroke-width="1.200"/><path d="M8.700 8.700l4.300 4.300" stroke="#8a8884" stroke-width="1.400"/></symbol>
<path id="pts" d="M536 319h.01M555 319h.01M517 335h.01M536 335h.01M555 335h.01M498 351h.01M517 351h.01M536 351h.01M555 351h.01M478 367h.01M498 367h.01M517 367h.01M536 367h.01M555 367h.01M459 382h.01M478 382h.01M498 382h.01M517 382h.01M536 382h.01M440 398h.01M459 398h.01M478 398h.01M498 398h.01M517 398h.01M421 414h.01M440 414h.01M459 414h.01M478 414h.01M498 414h.01M517 414h.01M402 430h.01M421 430h.01M440 430h.01M459 430h.01M478 430h.01M498 430h.01M402 446h.01M421 446h.01M440 446h.01M459 446h.01M478 446h.01M498 446h.01M402 461h.01M421 461h.01M440 461h.01M459 461h.01M478 461h.01M402 477h.01M421 477h.01M440 477h.01M459 477h.01M402 493h.01M421 493h.01M440 493h.01M459 493h.01M402 509h.01M421 509h.01M440 509h.01M402 525h.01M421 525h.01M440 525h.01M402 541h.01M421 541h.01M421 556h.01"/>
</defs>
</svg>

<div class="app">
<header class="titlebar">
<span class="wm-menu"><i></i><i></i><i></i></span>
<span class="wm-title">*Untitled Project - QGIS</span>
<span class="wm-btns">
<span class="wm-btn"><b class="wm-min"></b></span>
<span class="wm-btn"><b class="wm-max"></b></span>
<span class="wm-btn wm-close"><svg class="wm-x" viewBox="0 0 8 8"><path d="M1 1l6 6M7 1L1 7" stroke="#4b2110" stroke-width="1.600"/></svg></span>
</span>
</header>

<nav class="menubar">
<span class="mi m-project">Pro<u>j</u>ect</span>
<span class="mi m-edit"><u>E</u>dit</span>
<span class="mi m-view"><u>V</u>iew</span>
<span class="mi m-layer"><u>L</u>ayer</span>
<span class="mi m-settings"><u>S</u>ettings</span>
<span class="mi m-plugins"><u>P</u>lugins</span>
<span class="mi m-vector">Vect<u>o</u>r</span>
<span class="mi m-raster"><u>R</u>aster</span>
<span class="mi m-database"><u>D</u>atabase</span>
<span class="mi m-web"><u>W</u>eb</span>
<span class="mi m-processing">Pro<u>c</u>essing</span>
<span class="mi m-help"><u>H</u>elp</span>
</nav>

<div class="toolbar">
<span class="grip g12"></span>
<span class="btn"><svg class="i"><use href="#new"/></svg></span>
<span class="btn"><svg class="i"><use href="#open"/></svg></span>
<span class="btn"><svg class="i"><use href="#save"/></svg></span>
<span class="btn"><svg class="i"><use href="#saveas"/></svg></span>
<span class="btn"><svg class="i"><use href="#newlayout"/></svg></span>
<span class="btn"><svg class="i"><use href="#laymgr"/></svg></span>
<span class="grip g17"></span>
<span class="btn"><svg class="i"><use href="#pan"/></svg></span>
<span class="btn"><svg class="i"><use href="#pansel"/></svg></span>
<span class="btn"><svg class="i"><use href="#zin"/></svg></span>
<span class="btn"><svg class="i"><use href="#zout"/></svg></span>
<span class="btn"><svg class="i"><use href="#z11"/></svg></span>
<span class="btn"><svg class="i"><use href="#zfull"/></svg></span>
<span class="btn"><svg class="i"><use href="#zsel"/></svg></span>
<span class="btn"><svg class="i"><use href="#zlay"/></svg></span>
<span class="btn"><svg class="i"><use href="#zlast"/></svg></span>
<span class="btn"><svg class="i"><use href="#znext"/></svg></span>
<span class="btn"><svg class="i"><use href="#mapnew"/></svg></span>
<span class="btn"><svg class="i"><use href="#bmnew"/></svg></span>
<span class="btn"><svg class="i"><use href="#bm"/></svg></span>
<span class="btn"><svg class="i"><use href="#refresh"/></svg></span>
<span class="grip g16"></span>
<span class="btn"><svg class="i"><use href="#ident"/></svg></span>
<span class="btn"><svg class="i"><use href="#actions"/></svg></span>
<span class="dd d11 dis"></span>
<span class="btn on b32 ml1"><svg class="i"><use href="#select"/></svg></span>
<span class="splitdd"></span>
<span class="btn b32 ml2"><svg class="i"><use href="#formsel"/></svg></span>
<span class="dd d10"></span>
<span class="btn"><svg class="i"><use href="#desel"/></svg></span>
<span class="btn"><svg class="i"><use href="#table"/></svg></span>
<span class="btn"><svg class="i"><use href="#abacus"/></svg></span>
<span class="btn on"><svg class="i"><use href="#gearb"/></svg></span>
<span class="btn"><svg class="i"><use href="#sigma"/></svg></span>
<span class="more push">»</span>
<span class="grip g16"></span>
<span class="btn btn-end"><svg class="i"><use href="#help"/></svg></span>
</div>

<div class="toolbar">
<span class="grip g12"></span>
<span class="btn"><svg class="i"><use href="#editall"/></svg></span>
<span class="btn"><svg class="i"><use href="#pencil"/></svg></span>
<span class="btn"><svg class="i"><use href="#saveg"/></svg></span>
<span class="btn"><svg class="i"><use href="#adddots"/></svg></span>
<span class="btn"><svg class="i"><use href="#digit"/></svg></span>
<span class="btn"><svg class="i"><use href="#tabpen"/></svg></span>
<span class="btn"><svg class="i"><use href="#trash"/></svg></span>
<span class="btn"><svg class="i"><use href="#cut"/></svg></span>
<span class="btn"><svg class="i"><use href="#copy"/></svg></span>
<span class="btn"><svg class="i"><use href="#paste"/></svg></span>
<span class="btn"><svg class="i"><use href="#undo"/></svg></span>
<span class="btn"><svg class="i"><use href="#redo"/></svg></span>
<span class="grip g14"></span>
<span class="btn"><svg class="i"><use href="#labelabc"/></svg></span>
<span class="btn"><svg class="i"><use href="#pie"/></svg></span>
<span class="btn"><svg class="i"><use href="#labpin"/></svg></span>
<span class="btn"><svg class="i"><use href="#labg1"/></svg></span>
<span class="btn"><svg class="i"><use href="#labg2"/></svg></span>
<span class="btn"><svg class="i"><use href="#labg3"/></svg></span>
<span class="btn"><svg class="i"><use href="#labg4"/></svg></span>
<span class="btn"><svg class="i"><use href="#labg5"/></svg></span>
<span class="grip g18"></span>
<span class="btn"><svg class="i"><use href="#dbdown"/></svg></span>
<span class="btn"><svg class="i"><use href="#dbup"/></svg></span>
<span class="btn"><svg class="i"><use href="#db"/></svg></span>
<span class="grip g16"></span>
<span class="btn"><svg class="i"><use href="#globebin"/></svg></span>
<span class="grip g16"></span>
<span class="btn"><svg class="i"><use href="#pyterm"/></svg></span>
<span class="grip g16"></span>
<span class="btn"><svg class="i"><use href="#network"/></svg></span>
<span class="grip g16"></span>
<span class="btn"><svg class="i"><use href="#magnet"/></svg></span>
<span class="btn"><svg class="i"><use href="#vtree"/></svg></span>
<span class="btn"><svg class="i"><use href="#squares"/></svg></span>
<span class="more more-end push">»</span>
</div>

<div class="toolbar toolbar-last">
<span class="grip g12"></span>
<span class="btn"><svg class="i"><use href="#ruler"/></svg></span>
<span class="btn"><svg class="i"><use href="#dotsarrow"/></svg></span>
<span class="dd d12 dis"></span>
<span class="btn"><svg class="i"><use href="#blobrot"/></svg></span>
<span class="btn"><svg class="i"><use href="#hexa"/></svg></span>
<span class="btn"><svg class="i"><use href="#bh1"/></svg></span>
<span class="btn"><svg class="i"><use href="#bh2"/></svg></span>
<span class="btn"><svg class="i"><use href="#bh1"/></svg></span>
<span class="btn"><svg class="i"><use href="#bhx"/></svg></span>
<span class="btn"><svg class="i"><use href="#b2x"/></svg></span>
<span class="btn"><svg class="i"><use href="#reshape"/></svg></span>
<span class="btn"><svg class="i"><use href="#offset"/></svg></span>
<span class="btn"><svg class="i"><use href="#split1"/></svg></span>
<span class="btn"><svg class="i"><use href="#split1"/></svg></span>
<span class="btn"><svg class="i"><use href="#merge"/></svg></span>
<span class="btn"><svg class="i"><use href="#align"/></svg></span>
<span class="btn"><svg class="i"><use href="#rotpt"/></svg></span>
<span class="dd d12 dis"></span>
<span class="grip g16"></span>
<span class="btn"><svg class="i"><use href="#curve"/></svg></span>
<span class="dd d12 dis"></span>
<span class="btn"><svg class="i"><use href="#circ"/></svg></span>
<span class="dd d12 dis"></span>
<span class="btn"><svg class="i"><use href="#ellip"/></svg></span>
<span class="dd d12 dis"></span>
<span class="btn"><svg class="i"><use href="#rect"/></svg></span>
<span class="dd d12 dis"></span>
<span class="btn"><svg class="i"><use href="#poly"/></svg></span>
<span class="dd d12 dis"></span>
</div>

<main class="main">
<aside class="sidebar">
<span class="hgrip"></span>
<span class="sbtn"><svg class="i"><use href="#lmgr"/></svg></span>
<span class="sbtn"><svg class="i"><use href="#lbox"/></svg></span>
<span class="sbtn"><svg class="i"><use href="#lvec"/></svg></span>
<span class="sbtn"><svg class="i"><use href="#lfeather"/></svg></span>
<span class="sbtn"><svg class="i"><use href="#lchip"/></svg></span>
</aside>

<section class="dock dock-layers">
<div class="dock-title"><span>Layers</span><span class="dock-ctl"><svg class="ctl"><use href="#floatic"/></svg><svg class="ctl"><use href="#closeic"/></svg></span></div>
<div class="dock-tools layers-tools">
<svg class="t"><use href="#tstyle"/></svg>
<svg class="t m8"><use href="#tgroup"/></svg>
<svg class="t m8"><use href="#teye"/></svg>
<svg class="t m6"><use href="#tfilter"/></svg>
<svg class="t m8"><use href="#teps"/></svg>
<span class="dd d-small"></span>
<svg class="t m6"><use href="#tdown"/></svg>
<svg class="t m7"><use href="#tup"/></svg>
<svg class="t m6"><use href="#tremove"/></svg>
</div>
<div class="tree layer-tree">
<div class="layer-row">
<span class="cbx"><svg viewBox="0 0 12 12" class="cbx-i"><path d="M2 6.500l3 4 5-8" fill="none" stroke="#111" stroke-width="1.800"/></svg></span>
<span class="layer-dot"></span>
<span class="layer-name">data</span>
</div>
</div>
</section>

<div class="splitter"><span class="vgrip"></span></div>

<div class="canvas">
<svg class="map" viewBox="273 169 440 558">
<use href="#pts" class="pt-o"/>
<use href="#pts" class="pt-i"/>
</svg>
</div>

<div class="splitter"><span class="vgrip"></span></div>

<section class="dock dock-proc">
<div class="dock-title title-proc"><span>Processing Toolbox</span><span class="dock-ctl"><svg class="ctl"><use href="#floatic"/></svg><svg class="ctl"><use href="#closeic"/></svg></span></div>
<div class="dock-tools proc-tools">
<svg class="t"><use href="#tmodels"/></svg>
<svg class="t"><use href="#pythons"/></svg>
<svg class="t"><use href="#tclock"/></svg>
<svg class="t"><use href="#tdoc"/></svg>
<svg class="t"><use href="#twrench"/></svg>
</div>
<div class="searchbox"><svg class="s-ic"><use href="#searchic"/></svg><span class="ph ph-i">Search…</span></div>
<div class="proc-tree">
<div class="rows">
<div class="row"><span class="arr"></span><svg class="q"><use href="#qgis"/></svg><span class="lbl">Layer tools</span></div>
<div class="row"><span class="arr"></span><svg class="q"><use href="#qgis"/></svg><span class="lbl">Network analysis</span></div>
<div class="row"><span class="arr"></span><svg class="q"><use href="#qgis"/></svg><span class="lbl">Raster analysis</span></div>
<div class="row"><span class="arr"></span><svg class="q"><use href="#qgis"/></svg><span class="lbl">Raster terrain analysis</span></div>
<div class="row"><span class="arr"></span><svg class="q"><use href="#qgis"/></svg><span class="lbl">Raster tools</span></div>
<div class="row"><span class="arr"></span><svg class="q"><use href="#qgis"/></svg><span class="lbl">Vector analysis</span></div>
<div class="row"><span class="arr"></span><svg class="q"><use href="#qgis"/></svg><span class="lbl">Vector creation</span></div>
<div class="row"><span class="arr"></span><svg class="q"><use href="#qgis"/></svg><span class="lbl">Vector general</span></div>
<div class="row"><span class="arr open"></span><svg class="q"><use href="#qgis"/></svg><span class="lbl">Vector geometry</span></div>
<div class="row leaf sel"><svg class="li"><use href="#addgeo"/></svg><span class="lbl">Add geometry attributes</span></div>
<div class="row leaf"><svg class="li"><use href="#gear14"/></svg><span class="lbl">Aggregate</span></div>
<div class="row leaf"><svg class="li"><use href="#gear14"/></svg><span class="lbl">Boundary</span></div>
<div class="row leaf"><svg class="li"><use href="#gear14"/></svg><span class="lbl">Bounding boxes</span></div>
<div class="row leaf"><svg class="li"><use href="#buffer"/></svg><span class="lbl">Buffer</span></div>
<div class="row leaf"><svg class="li"><use href="#centroid"/></svg><span class="lbl">Centroids</span></div>
<div class="row leaf"><svg class="li"><use href="#check"/></svg><span class="lbl">Check validity</span></div>
<div class="row leaf"><svg class="li"><use href="#collect"/></svg><span class="lbl">Collect geometries</span></div>
<div class="row leaf"><svg class="li"><use href="#gear14"/></svg><span class="lbl">Concave hull</span></div>
<div class="row leaf"><svg class="li"><use href="#gear14"/></svg><span class="lbl">Convert geometry type</span></div>
<div class="row leaf"><svg class="li"><use href="#convex"/></svg><span class="lbl">Convex hull</span></div>
<div class="row leaf"><svg class="li"><use href="#gear14"/></svg><span class="lbl">Create layer from extent</span></div>
<div class="row leaf"><svg class="li"><use href="#gear14"/></svg><span class="lbl">Create wedge buffers</span></div>
<div class="row leaf"><svg class="li"><use href="#delaunay"/></svg><span class="lbl">Delaunay triangulation</span></div>
<div class="row leaf"><svg class="li"><use href="#gear14"/></svg><span class="lbl">Delete holes</span></div>
<div class="row leaf"><svg class="li"><use href="#gear14"/></svg><span class="lbl">Densify by count</span></div>
<div class="row leaf"><svg class="li"><use href="#gear14"/></svg><span class="lbl">Densify by interval</span></div>
</div>
<div class="vscroll">
<span class="sb-arrow up"></span>
<span class="sb-thumb"></span>
<span class="sb-track"></span>
<span class="sb-arrow down"></span>
</div>
</div>
</section>
</main>

<footer class="status">
<div class="locator"><svg class="s-ic"><use href="#searchic"/></svg><span class="ph">Type to locate (Ctrl+K)</span></div>
<span class="clip c-legend">1 legen</span>
<span class="clip c-coord">rdin</span>
<div class="field f-coord">-84.13500,34.36708</div>
<svg class="st-mouse"><use href="#mouse"/></svg>
<span class="clip c-scale">a</span>
<div class="field f-scale"><span class="f-val">1:5,946</span><span class="combo-dd"></span></div>
<svg class="st-lock"><use href="#lock"/></svg>
<span class="clip c-mag">jn</span>
<div class="field f-mag"><span class="f-val">100%</span><span class="spin"><i class="s-up"></i><i class="s-down"></i></span></div>
<span class="clip c-rot">a</span>
<div class="field f-rot"><span class="f-val">0.0 °</span><span class="spin"><i class="s-up"></i><i class="s-down"></i></span></div>
<span class="cbx cbx-sm"><svg viewBox="0 0 12 12" class="cbx-i"><path d="M2 6.500l3 4 5-8" fill="none" stroke="#111" stroke-width="1.500"/></svg></span>
<span class="st-render">Render</span>
<svg class="st-globe"><use href="#globe"/></svg>
<span class="st-epsg">EPSG:4326</span>
<svg class="st-chat"><use href="#chat"/></svg>
<span class="st-size"></span>
</footer>
</div>
</body>
</html>
```

FILE: styles.css
```css
* { box-sizing: border-box; }
html, body { margin: 0; padding: 0; background: #fff; }
body { width: 1142px; height: 759px; overflow: hidden; font-family: "Noto Sans", "Open Sans", sans-serif; font-size: 14.6px; color: #1c1c1a; }
.defs { width: 0; height: 0; display: block; overflow: hidden; }
.svgt, .svgt-b, .svgt-i { font-family: "Noto Sans", sans-serif; text-anchor: middle; }
.svgt-b { font-weight: 700; }
.svgt-i { font-weight: 700; font-style: italic; font-family: "Liberation Serif", serif; }

.app { width: 1142px; height: 759px; display: flex; flex-direction: column; background: #eeebe6; }

.titlebar { height: 30px; flex: none; display: flex; align-items: center; justify-content: center; position: relative; background: linear-gradient(#3e3d38, #514f47); border-top: 1px solid #5b5950; border-radius: 6px 6px 0 0; padding-bottom: 2px; }
.wm-title { color: #dfdbd2; font-weight: 700; font-size: 14.5px; letter-spacing: .05px; }
.wm-menu { position: absolute; left: 6px; top: 6px; width: 17px; height: 17px; border-radius: 50%; background: #62605a; border: 1px solid #35342f; display: flex; flex-direction: column; align-items: center; justify-content: center; gap: 2px; }
.wm-menu i { display: block; width: 11px; height: 2px; background: #2f2e2a; }
.wm-btns { position: absolute; right: 5px; top: 5px; display: flex; gap: 3px; }
.wm-btn { width: 17px; height: 17px; border-radius: 50%; background: linear-gradient(#7b7970, #5f5d55); border: 1px solid #3a3934; display: flex; align-items: center; justify-content: center; }
.wm-min { display: block; width: 8px; height: 2px; background: #34332f; }
.wm-max { display: block; width: 8px; height: 8px; border: 1.500px solid #34332f; }
.wm-close { background: linear-gradient(#f0804c, #d9501f); }
.wm-x { width: 8px; height: 8px; display: block; }

.menubar { height: 22px; flex: none; display: flex; align-items: center; background: #f0eeea; padding-bottom: 2px; }
.mi { display: block; flex: none; white-space: nowrap; }
.mi u { text-decoration-thickness: 2px; text-underline-offset: 2px; text-decoration-skip-ink: none; }
.m-project { margin-left: 10px; width: 62px; }
.m-edit { width: 42px; }
.m-view { width: 48px; }
.m-layer { width: 51px; }
.m-settings { width: 71px; }
.m-plugins { width: 64px; }
.m-vector { width: 59px; }
.m-raster { width: 58px; }
.m-database { width: 78px; }
.m-web { width: 46px; }
.m-processing { width: 87px; }
.m-help { width: 40px; }

.toolbar { height: 39px; flex: none; display: flex; align-items: center; background: linear-gradient(#f6f5f2, #eeece8); border-top: 1px solid #cfccc6; padding-bottom: 2px; }
.toolbar-last { height: 38px; border-bottom: 1px solid #b9b6b0; padding-bottom: 1px; }
.btn { width: 33px; height: 32px; flex: none; display: flex; align-items: center; justify-content: center; border: 1px solid transparent; border-radius: 4px; }
.b32 { width: 32px; }
.on { background: #dedcd8; border-color: #b5b2ac; }
.ml1 { margin-left: 1px; }
.ml2 { margin-left: 2px; }
.i { width: 24px; height: 24px; display: block; }
.grip { flex: none; height: 18px; display: block; background-image: radial-gradient(circle, #b5b3ad 0.9px, transparent 1px); background-size: 3px 3px; background-repeat: repeat; background-clip: content-box; }
.g12 { width: 12px; padding: 0 3px 0 4px; margin-left: 0; }
.g14 { width: 14px; padding: 0 3px 0 4px; }
.g16 { width: 16px; padding: 0 5px; }
.g17 { width: 17px; padding: 0 5px 0 6px; }
.g18 { width: 18px; padding: 0 7px 0 6px; }
.dd { flex: none; height: 8px; position: relative; display: block; }
.dd::after { content: ""; position: absolute; left: 50%; top: 1px; margin-left: -4px; border: 4px solid transparent; border-top: 5px solid #333; border-bottom: 0; }
.dis::after { border-top-color: #bdbbb6; }
.d10 { width: 10px; }
.d11 { width: 11px; }
.d12 { width: 12px; }
.d-small { width: 12px; margin-left: 1px; }
.splitdd { width: 12px; height: 32px; flex: none; position: relative; background: #dedcd8; border: 1px solid #b5b2ac; border-radius: 0 4px 4px 0; }
.splitdd::after { content: ""; position: absolute; left: 1px; top: 13px; border: 4px solid transparent; border-top: 5px solid #333; border-bottom: 0; }
.more { font-weight: 700; font-size: 14px; color: #111; flex: none; line-height: 1; }
.push { margin-left: auto; }
.btn-end { margin-right: 2px; }
.more-end { margin-right: 5px; }

.main { flex: 1; min-height: 0; display: flex; }
.sidebar { width: 39px; flex: none; display: flex; flex-direction: column; align-items: center; border-right: 1px solid #c6c3bd; background: linear-gradient(90deg, #f6f5f2, #eeece8); }
.hgrip { display: block; width: 18px; height: 5px; margin: 5px 0 3px; background-image: radial-gradient(circle, #b5b3ad 0.9px, transparent 1px); background-size: 3px 3px; }
.sbtn { width: 32px; height: 32px; display: flex; align-items: center; justify-content: center; flex: none; }
.dock { display: flex; flex-direction: column; flex: none; min-height: 0; }
.dock-layers { width: 226px; margin-left: 1px; }
.dock-proc { width: 422px; }
.dock-title { height: 21px; flex: none; display: flex; align-items: center; justify-content: space-between; padding: 0 3px 2px 4px; }
.title-proc { padding-left: 3px; }
.dock-ctl { display: flex; gap: 3px; }
.ctl { width: 11px; height: 11px; display: block; }
.dock-tools { flex: none; display: flex; align-items: center; }
.t { width: 18px; height: 18px; display: block; flex: none; }
.m6 { margin-left: 6px; }
.m7 { margin-left: 7px; }
.m8 { margin-left: 8px; }
.layers-tools { padding: 0 0 2px 6px; height: 30px; }
.tree { flex: 1; min-height: 0; background: #fff; border: 1px solid #bdbab4; }
.layer-tree { margin-right: 1px; }
.layer-row { height: 19px; background: #308cc6; display: flex; align-items: center; padding-left: 23px; }
.cbx { width: 14px; height: 14px; background: #fff; border: 1px solid #9a9894; display: flex; flex: none; }
.cbx-i { width: 12px; height: 12px; display: block; }
.layer-dot { width: 7px; height: 7px; border-radius: 50%; background: #b5695a; border: 1px solid #6b5a60; margin-left: 11px; flex: none; }
.layer-name { color: #fff; font-weight: 700; text-decoration: underline; margin-left: 10px; padding-bottom: 1px; }
.splitter { width: 6px; flex: none; display: flex; align-items: center; justify-content: center; }
.vgrip { display: block; width: 3px; height: 18px; background-image: radial-gradient(circle, #b5b3ad 0.7px, transparent 0.9px); background-size: 3px 3px; }
.canvas { width: 442px; flex: none; background: #fff; border: 1px solid #bdbab4; min-height: 0; }
.map { width: 440px; height: 558px; display: block; }
.pt-o { fill: none; stroke: #45403c; stroke-width: 9; stroke-linecap: round; }
.pt-i { fill: none; stroke: #e96d3f; stroke-width: 7; stroke-linecap: round; }

.proc-tools { padding: 0 0 0 6px; gap: 7px; height: 31px; }
.searchbox { height: 23px; flex: none; background: #fff; border: 1px solid #b5b2ac; border-radius: 3px; display: flex; align-items: center; padding-left: 7px; gap: 8px; margin: 0 1px 1px 0; }
.s-ic { width: 14px; height: 14px; display: block; flex: none; }
.ph { color: #8a8884; }
.ph-i { font-style: italic; }
.proc-tree { flex: 1; min-height: 0; display: flex; background: #fff; border: 1px solid #bdbab4; margin-right: 1px; overflow: hidden; }
.rows { flex: 1; min-width: 0; overflow: hidden; }
.row { height: 19px; display: flex; align-items: center; white-space: nowrap; }
.lbl { padding-bottom: 2px; }
.leaf { padding-left: 43px; }
.sel { background: #308cc6; color: #fff; }
.arr { width: 0; height: 0; flex: none; margin-left: 6px; border: 4.500px solid transparent; border-left: 6px solid #333; border-right: 0; }
.arr.open { border: 4.500px solid transparent; border-top: 6px solid #333; border-bottom: 0; margin-left: 4px; width: 9px; }
.arr + .q { margin-left: 10px; }
.arr.open + .q { margin-left: 9px; }
.q { width: 14px; height: 14px; flex: none; display: block; margin-right: 6px; }
.li { width: 14px; height: 14px; flex: none; display: block; margin-right: 7px; }
.vscroll { width: 14px; flex: none; display: flex; flex-direction: column; background: #f2f0ec; border-left: 1px solid #c6c3bd; }
.sb-arrow { height: 13px; flex: none; display: flex; align-items: center; justify-content: center; }
.sb-arrow::after { content: ""; border: 4px solid transparent; }
.up::after { border-bottom: 4px solid #333; border-top: 0; }
.down::after { border-top: 4px solid #333; border-bottom: 0; }
.sb-thumb { height: 59px; flex: none; background: #dad8d3; border-top: 1px solid #c6c3bd; border-bottom: 1px solid #c6c3bd; }
.sb-track { flex: 1; }

.status { height: 31px; flex: none; display: flex; align-items: center; position: relative; padding-top: 1px; }
.locator { width: 243px; height: 26px; margin-left: 4px; flex: none; background: #fff; border: 1px solid #bdbab4; border-radius: 3px; display: flex; align-items: center; padding: 0 0 2px 8px; gap: 6px; }
.clip { display: flex; overflow: hidden; white-space: nowrap; flex: none; padding-bottom: 2px; }
.c-legend { width: 49px; margin-left: 9px; }
.c-coord { width: 22px; margin-left: 8px; }
.field { height: 26px; background: #fff; border: 1px solid #bdbab4; border-radius: 3px; display: flex; align-items: center; flex: none; padding-left: 3px; }
.f-val { padding-bottom: 2px; }
.f-coord { width: 145px; margin-left: 4px; padding-bottom: 2px; }
.st-mouse { width: 20px; height: 20px; flex: none; margin: 0 4px 0 1px; }
.c-scale { width: 4px; justify-content: flex-end; margin-left: 7px; }
.f-scale { width: 104px; margin-left: 3px; justify-content: space-between; padding-right: 0; }
.combo-dd { width: 20px; height: 24px; border-left: 1px solid #bdbab4; position: relative; background: #f2f0ec; border-radius: 0 3px 3px 0; }
.combo-dd::after { content: ""; position: absolute; left: 5px; top: 10px; border: 4px solid transparent; border-top: 5px solid #444; border-bottom: 0; }
.st-lock { width: 14px; height: 18px; flex: none; margin-left: 6px; }
.c-mag { width: 12px; margin-left: 13px; justify-content: flex-end; }
.f-mag { width: 97px; margin-left: 5px; justify-content: space-between; padding-left: 4px; }
.c-rot { width: 5px; margin-left: 9px; justify-content: flex-end; }
.f-rot { width: 93px; margin-left: 10px; justify-content: space-between; padding-left: 4px; }
.spin { width: 14px; height: 24px; border-left: 1px solid #bdbab4; display: flex; flex-direction: column; align-items: center; justify-content: center; gap: 3px; background: #f2f0ec; }
.spin i { display: block; border: 4px solid transparent; }
.spin .s-up { border-bottom: 5px solid #444; border-top: 0; }
.spin .s-down { border-top: 5px solid #444; border-bottom: 0; }
.cbx-sm { margin-left: 6px; }
.st-render { margin-left: 5px; flex: none; padding-bottom: 2px; }
.st-globe { width: 15px; height: 15px; margin-left: 19px; flex: none; }
.st-epsg { margin-left: 5px; flex: none; padding-bottom: 2px; }
.st-chat { width: 20px; height: 20px; margin-left: 16px; flex: none; }
.st-size { position: absolute; right: 0; bottom: 0; width: 14px; height: 14px; background-image: radial-gradient(circle, #bdbbb6 0.8px, transparent 1px); background-size: 3px 3px; }
```
